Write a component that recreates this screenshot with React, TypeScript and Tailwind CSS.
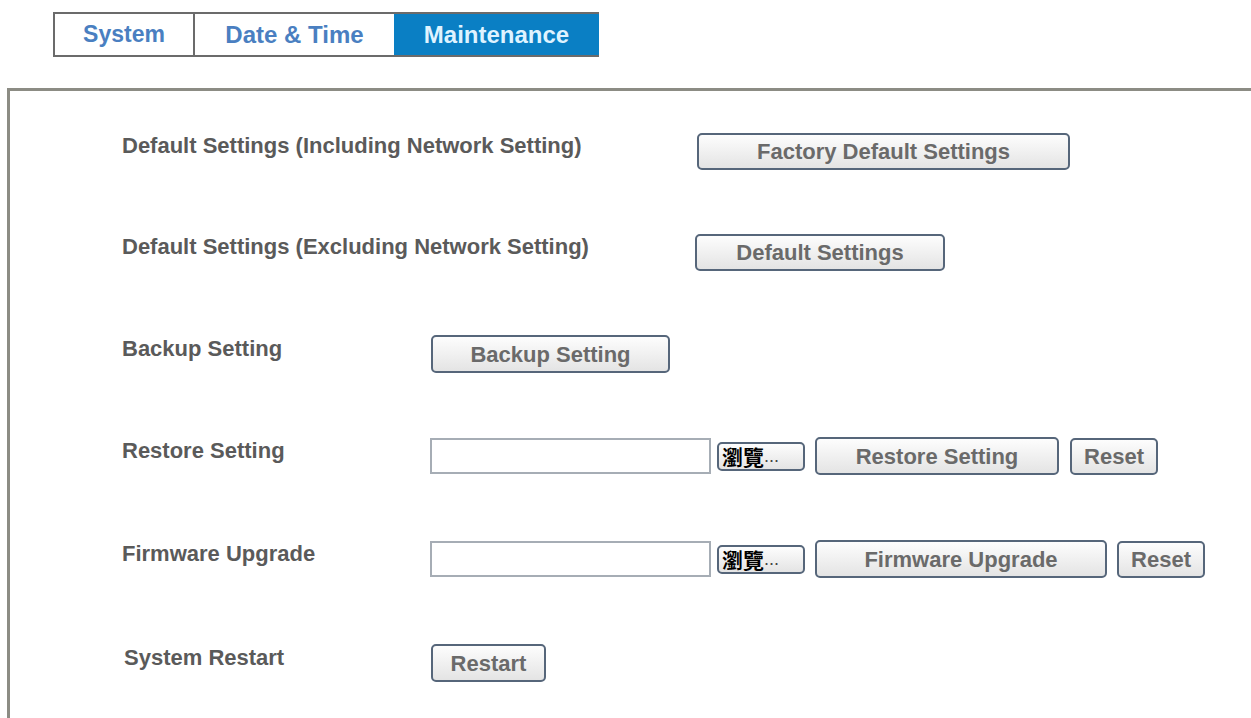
import React from "react";

const font = { fontFamily: '"Liberation Sans", Arial, sans-serif' };

function Btn({ children, className = "" }: { children: React.ReactNode; className?: string }) {
    return (
        <button
            className={
                "flex items-center justify-center rounded-[5px] border-2 border-[#56667a] bg-gradient-to-b from-[#fdfdfd] to-[#e4e4e4] text-[22px] font-bold text-[#6a6a6a] " +
                className
            }
        >
            {children}
        </button>
    );
}

function Browse() {
    return (
        <button className="flex h-[29px] w-[88px] items-center justify-start rounded-[5px] border-2 border-[#56667a] bg-gradient-to-b from-[#fdfdfd] to-[#e4e4e4] pl-[3px] font-bold text-black">
            <span style={{ fontFamily: '"Noto Sans CJK TC", sans-serif' }} className="text-[21px] leading-none">
                瀏覽
            </span>
            <span className="text-[18px] font-normal text-[#444]">...</span>
        </button>
    );
}

function FileInput() {
    return <div className="h-[36px] w-[281px] border-2 border-[#a6adb5] bg-white" />;
}

export default function App() {
    return (
        <div className="h-[718px] w-[1251px] overflow-hidden bg-white" style={font}>
            {/* Tabs */}
            <div className="ml-[53px] mt-[12px] flex h-[45px] w-[546px] border-2 border-[#6b6b6b] border-r-0">
                <div className="flex w-[140px] items-center justify-center border-r-2 border-[#6b6b6b] text-[23px] font-bold text-[#4a7fc1]">
                    System
                </div>
                <div className="flex w-[199px] items-center justify-center text-[24px] font-bold text-[#4a7fc1]">
                    Date &amp; Time
                </div>
                <div className="flex flex-1 items-center justify-center bg-[#0a7fc4] text-[24px] font-bold text-[#dff3ff]">
                    Maintenance
                </div>
            </div>

            {/* Panel */}
            <div className="ml-[7px] mt-[31px] h-[700px] border-l-[3px] border-t-[3px] border-[#8c8c84] pl-[112px] pt-[42px] text-[#5a5a5a]">
                {/* Row 1 */}
                <div className="flex h-[36px] items-center">
                    <div className="w-[575px] -translate-y-[6px] text-[22px] font-bold">
                        Default Settings (Including Network Setting)
                    </div>
                    <Btn className="h-[37px] w-[373px]">Factory Default Settings</Btn>
                </div>

                {/* Row 2 */}
                <div className="mt-[65px] flex h-[37px] items-center">
                    <div className="w-[573px] -translate-y-[6px] text-[22px] font-bold">
                        Default Settings (Excluding Network Setting)
                    </div>
                    <Btn className="h-[37px] w-[250px]">Default Settings</Btn>
                </div>

                {/* Row 3 */}
                <div className="mt-[64px] flex h-[38px] items-center">
                    <div className="w-[309px] -translate-y-[6px] text-[22px] font-bold">Backup Setting</div>
                    <Btn className="h-[38px] w-[239px]">Backup Setting</Btn>
                </div>

                {/* Row 4 */}
                <div className="mt-[64px] flex h-[38px] items-center">
                    <div className="w-[308px] -translate-y-[6px] text-[22px] font-bold">Restore Setting</div>
                    <FileInput />
                    <div className="ml-[6px]">
                        <Browse />
                    </div>
                    <Btn className="ml-[10px] h-[38px] w-[244px]">Restore Setting</Btn>
                    <Btn className="ml-[11px] h-[37px] w-[88px]">Reset</Btn>
                </div>

                {/* Row 5 */}
                <div className="mt-[65px] flex h-[38px] items-center">
                    <div className="w-[308px] -translate-y-[6px] text-[22px] font-bold">Firmware Upgrade</div>
                    <FileInput />
                    <div className="ml-[6px]">
                        <Browse />
                    </div>
                    <Btn className="ml-[10px] h-[38px] w-[292px]">Firmware Upgrade</Btn>
                    <Btn className="ml-[10px] h-[37px] w-[88px]">Reset</Btn>
                </div>

                {/* Row 6 */}
                <div className="mt-[66px] flex h-[38px] items-center">
                    <div className="w-[309px] -translate-y-[6px] pl-[2px] text-[22px] font-bold">System Restart</div>
                    <Btn className="h-[38px] w-[115px]">Restart</Btn>
                </div>
            </div>
        </div>
    );
}
